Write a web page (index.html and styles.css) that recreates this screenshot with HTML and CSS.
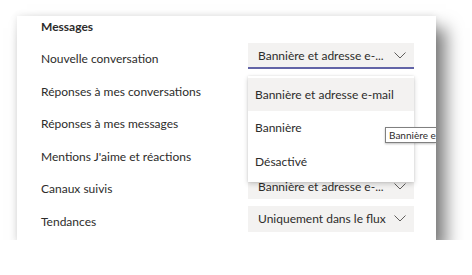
FILE: index.html
```html
<!DOCTYPE html>
<html lang="fr">

<head>
    <meta charset="UTF-8">
    <meta name="viewport" content="width=device-width, initial-scale=1.0">
    <title>Notifications - Messages</title>
    <link rel="stylesheet" href="styles.css">
</head>

<body>
    <div class="panel">
        <h3 class="panel-title">Messages</h3>

        <div class="settings">
            <div class="row">
                <span class="label">Nouvelle conversation</span>
                <div class="select open">
                    <span class="select-value">Bannière et adresse e-...</span>
                    <svg class="chevron" width="12" height="7" viewBox="0 0 12 7"><path d="M0.5 0.5l5.5 5.5 5.5-5.5" /></svg>

                    <!-- open dropdown -->
                    <ul class="menu">
                        <li class="menu-item active">Bannière et adresse e-mail</li>
                        <li class="menu-item">Bannière</li>
                        <li class="menu-item">Désactivé</li>
                    </ul>
                </div>
            </div>
            <div class="row">
                <span class="label">Réponses à mes conversations</span>
            </div>
            <div class="row">
                <span class="label">Réponses à mes messages</span>
            </div>
            <div class="row">
                <span class="label">Mentions J'aime et réactions</span>
            </div>
            <div class="row">
                <span class="label">Canaux suivis</span>
                <div class="select">
                    <span class="select-value">Bannière et adresse e-...</span>
                    <svg class="chevron" width="12" height="7" viewBox="0 0 12 7"><path d="M0.5 0.5l5.5 5.5 5.5-5.5" /></svg>
                </div>
            </div>
            <div class="row">
                <span class="label">Tendances</span>
                <div class="select">
                    <span class="select-value">Uniquement dans le flux</span>
                    <svg class="chevron" width="12" height="7" viewBox="0 0 12 7"><path d="M0.5 0.5l5.5 5.5 5.5-5.5" /></svg>
                </div>
            </div>
        </div>

        <!-- tooltip, cut by the edge of the window -->
        <div class="tooltip">Bannière e</div>
    </div>
</body>

</html>
```

FILE: styles.css
```css
body {
    margin: 0;
    padding: 16px 0 0 17px;
    background-color: #fff;
    font-family: Lato, "Open Sans", Arial, sans-serif;
    font-size: 12px;
    color: #2d2c2b;
}

.panel {
    position: relative;
    width: 419px;
    height: 224px;
    box-sizing: border-box;
    padding: 3px 22px 0 24px;
    background-color: #fff;
    overflow: hidden;
    box-shadow: 10px 12px 16px rgba(0, 0, 0, 0.5), 0 0 7px rgba(0, 0, 0, 0.1);
}

.panel-title {
    margin: 0 0 8px 0;
    font-size: 12px;
    line-height: 16px;
    font-weight: bold;
}

.settings {
    display: flex;
    flex-direction: column;
    gap: 6.6px;
}

.row {
    display: flex;
    justify-content: space-between;
    height: 26px;
}

.label {
    padding-top: 8px;
    line-height: 16px;
}

.select {
    position: relative;
    display: flex;
    align-items: center;
    justify-content: space-between;
    width: 166px;
    height: 26px;
    box-sizing: border-box;
    padding: 0 8px 0 10px;
    background-color: #f3f2f1;
    white-space: nowrap;
}

.select.open {
    border-bottom: 2px solid #6264a7;
}

.chevron path {
    fill: none;
    stroke: #605e5c;
    stroke-width: 1;
}

.menu {
    position: absolute;
    top: 33px;
    left: 0;
    width: 166px;
    margin: 0;
    padding: 2px 0 4px 0;
    list-style: none;
    background-color: #fff;
    box-shadow: 0 2px 5px rgba(0, 0, 0, 0.18), 0 0 2px rgba(0, 0, 0, 0.1);
    z-index: 2;
}

.menu-item {
    height: 33.3px;
    line-height: 33px;
    padding-left: 7px;
}

.menu-item.active {
    background-color: #f3f2f1;
}

.tooltip {
    position: absolute;
    top: 111px;
    right: 0;
    width: 47px;
    padding: 0 0 0 3px;
    border: 1px solid #808080;
    border-right: none;
    background-color: #fff;
    font-size: 10px;
    line-height: 14px;
    white-space: nowrap;
    overflow: hidden;
    box-shadow: 0 1px 2px rgba(0, 0, 0, 0.25);
    z-index: 3;
}
```
